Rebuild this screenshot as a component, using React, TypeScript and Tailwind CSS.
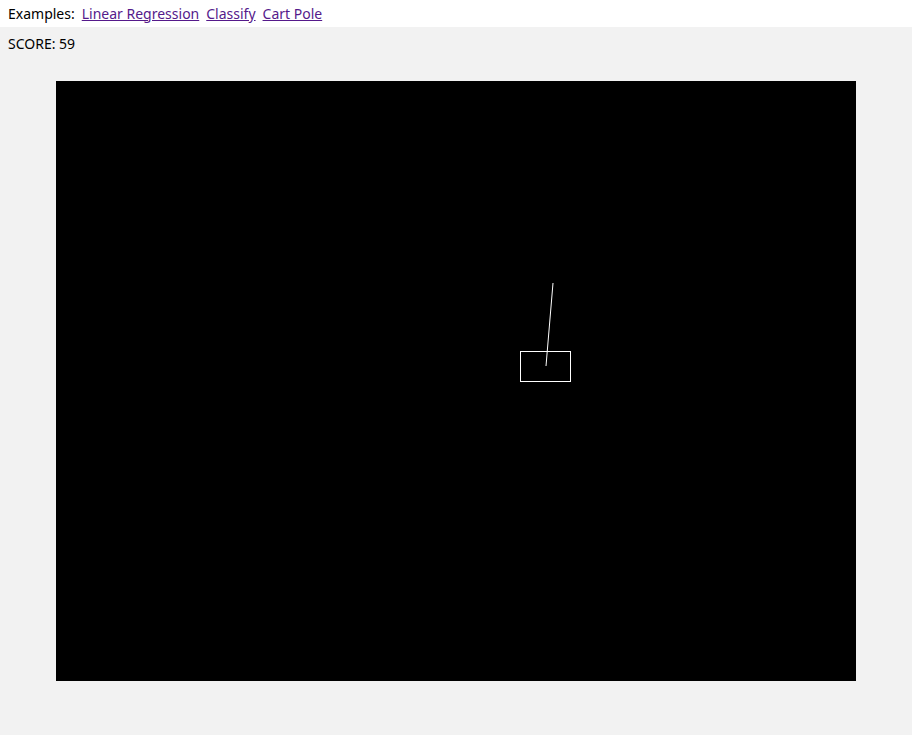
export default function App() {
  return (
    <div className="min-h-[735px] bg-[#f2f2f2] font-['Noto_Sans',sans-serif] text-[14px] text-black">
      <div className="flex h-[27px] items-center gap-[7px] bg-white px-2 pb-[1px]">
        <span>Examples:</span>
        <a href="#" className="text-[#551a8b] underline">Linear Regression</a>
        <a href="#" className="text-[#551a8b] underline">Classify</a>
        <a href="#" className="text-[#551a8b] underline">Cart Pole</a>
      </div>
      <div className="flex h-[33px] items-center px-2">SCORE: 59</div>
      <div className="mt-[21px] flex justify-center">
        <svg width="800" height="600" className="block bg-black">
          <rect x="464.5" y="270.5" width="50" height="30" fill="none" stroke="white" strokeWidth="1" />
          <line x1="490" y1="285" x2="497" y2="202" stroke="white" strokeWidth="1" />
        </svg>
      </div>
    </div>
  )
}
